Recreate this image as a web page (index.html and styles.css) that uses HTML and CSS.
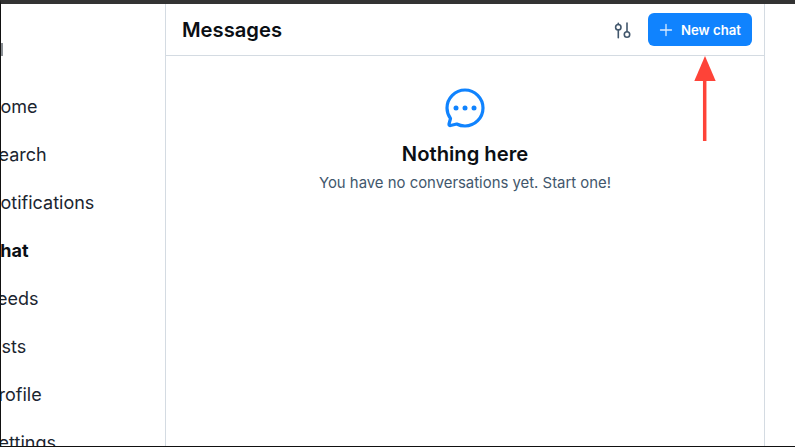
FILE: index.html
```html
<!DOCTYPE html>
<html lang="en">
<head>
    <meta charset="UTF-8">
    <meta name="viewport" content="width=device-width, initial-scale=1.0">
    <title>Messages</title>
    <link rel="stylesheet" href="styles.css">
</head>
<body>
    <div class="frame">
        <aside class="sidebar">
            <div class="logo-sliver"></div>
            <nav class="nav">
                <a class="nav-item">Home</a>
                <a class="nav-item">Search</a>
                <a class="nav-item">Notifications</a>
                <a class="nav-item active">Chat</a>
                <a class="nav-item">Feeds</a>
                <a class="nav-item">Lists</a>
                <a class="nav-item">Profile</a>
                <a class="nav-item">Settings</a>
            </nav>
        </aside>

        <main class="main">
            <div class="header">
                <h1>Messages</h1>
                <div class="header-actions">
                    <svg class="filter-icon" width="20" height="20" viewBox="0 0 20 20" fill="none" stroke="#42576c" stroke-width="1.6" stroke-linecap="round">
                        <path d="M5.300 3.200v1.200M5.300 10v7.800M14 3v8.500"/>
                        <circle cx="5.300" cy="7.200" r="2.700"/>
                        <circle cx="14" cy="14.500" r="2.700"/>
                    </svg>
                    <button class="new-chat">
                        <svg width="14" height="14" viewBox="0 0 14 14" stroke="#d9ebff" stroke-width="1.300" stroke-linecap="round">
                            <path d="M7 1.500v11M1.500 7h11"/>
                        </svg>
                        New chat
                    </button>
                </div>
            </div>

            <div class="empty">
                <svg class="empty-icon" width="42" height="42" viewBox="0 0 42 42" fill="none">
                    <path d="M6.500 31.500C4.300 28.500 3 24.900 3 21 3 11.100 11.100 3 21 3s18 8.100 18 18-8.100 18-18 18c-3 0-5.800-.7-8.300-2l-6.200 1.500c-1 .2-1.700-.6-1.500-1.500z" stroke="#1083fe" stroke-width="3.200" stroke-linejoin="round"/>
                    <circle cx="12" cy="21" r="2.500" fill="#1083fe"/>
                    <circle cx="21" cy="21" r="2.500" fill="#1083fe"/>
                    <circle cx="30" cy="21" r="2.500" fill="#1083fe"/>
                </svg>
                <h2>Nothing here</h2>
                <p>You have no conversations yet. Start one!</p>
            </div>
        </main>
    </div>

    <!-- annotation drawn over the screenshot -->
    <svg class="arrow" width="24" height="86" viewBox="0 0 24 86">
        <path d="M12 0L22.700 25H1.300z" fill="#fe4338"/>
        <path d="M11.700 24V85" stroke="#fe4338" stroke-width="3.500"/>
    </svg>
</body>
</html>
```

FILE: styles.css
```css
* {
    margin: 0;
    padding: 0;
    box-sizing: border-box;
}

html, body {
    height: 100%;
    overflow: hidden;
}

body {
    font-family: Inter, 'Liberation Sans', sans-serif;
    background: white;
    color: #0b0f14;
    border-top: 4px solid #333333;
    border-left: 1px solid #111111;
    border-bottom: 1px solid #111111;
    position: relative;
}

.frame {
    display: flex;
    height: 100%;
}

.sidebar {
    width: 165px;
    flex-shrink: 0;
    overflow: hidden;
    border-right: 1px solid #d4dbe2;
}

.logo-sliver {
    width: 2px;
    height: 13px;
    margin-top: 39px;
    background: #8a8f94;
}

.nav {
    display: flex;
    flex-direction: column;
    margin-top: 27px;
    margin-left: -14px;
}

.nav-item {
    display: block;
    height: 48px;
    line-height: 48px;
    font-size: 18px;
    white-space: nowrap;
    color: #1b2530;
}

.nav-item.active {
    font-weight: 700;
    color: #0b0f14;
}

.main {
    width: 599px;
    flex-shrink: 0;
    border-right: 1px solid #d4dbe2;
}

.header {
    display: flex;
    align-items: center;
    justify-content: space-between;
    height: 52px;
    padding: 0 12px 0 16px;
    border-bottom: 1px solid #d4dbe2;
}

.header h1 {
    font-size: 20.200px;
    font-weight: 600;
}

.header-actions {
    display: flex;
    align-items: center;
    gap: 15px;
}

.new-chat {
    display: flex;
    align-items: center;
    gap: 8px;
    width: 104px;
    height: 33px;
    padding-left: 11px;
    border: none;
    border-radius: 6px;
    background: #1083fe;
    color: white;
    font-family: inherit;
    font-size: 13.200px;
    font-weight: 600;
}

.empty {
    display: flex;
    flex-direction: column;
    align-items: center;
    padding-top: 31px;
}

.empty h2 {
    margin-top: 13px;
    font-size: 20.200px;
    font-weight: 600;
    line-height: 24px;
}

.empty p {
    margin-top: 7px;
    font-size: 14.900px;
    line-height: 20px;
    color: #42576c;
}

.arrow {
    position: absolute;
    left: 692px;
    top: 52px;
}
```
